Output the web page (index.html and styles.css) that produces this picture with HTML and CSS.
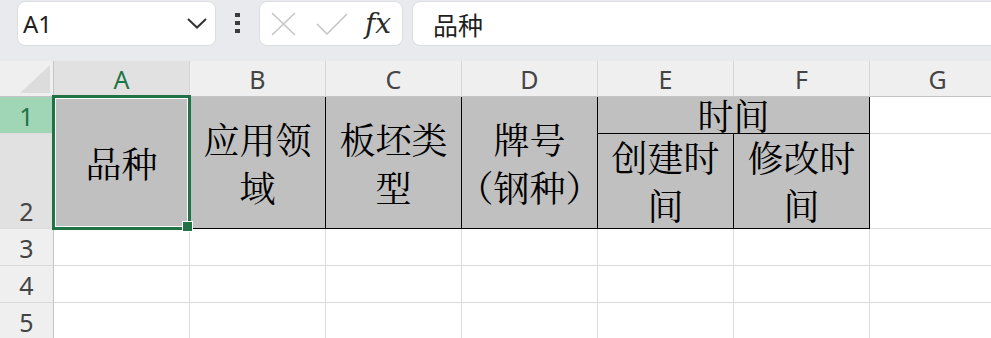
FILE: index.html
```html
<!DOCTYPE html>
<html lang="zh-CN">
<head>
  <meta charset="UTF-8">
  <title>品种 - 表格</title>
  <link rel="stylesheet" href="styles.css">
</head>
<body>
  <div class="toolbar">
    <div class="name-box">
      <span>A1</span>
      <svg width="20" height="11" viewBox="0 0 20 11"><path d="M1 1 L10 9.5 L19 1" fill="none" stroke="#333" stroke-width="2"/></svg>
    </div>
    <div class="grip"><i></i><i></i><i></i></div>
    <div class="fx-buttons">
      <svg width="25" height="24" viewBox="0 0 25 24"><path d="M1 1 L24 23 M24 1 L1 23" stroke="#c6c6c6" stroke-width="1.6" fill="none"/></svg>
      <svg width="32" height="22" viewBox="0 0 32 22"><path d="M1 11 L11 21 L31 1" stroke="#c6c6c6" stroke-width="1.6" fill="none"/></svg>
      <span class="fx">fx</span>
    </div>
    <div class="formula-bar">品种</div>
  </div>

  <div class="sheet">
    <!-- column headers -->
    <div class="corner"><svg width="30" height="28" viewBox="0 0 30 28"><polygon points="30,0 30,28 0,28" fill="#dcdcdc"/></svg></div>
    <div class="col-head active">A</div>
    <div class="col-head">B</div>
    <div class="col-head">C</div>
    <div class="col-head">D</div>
    <div class="col-head">E</div>
    <div class="col-head">F</div>
    <div class="col-head">G</div>

    <!-- row 1 -->
    <div class="row-head active">1</div>
    <div class="cell title tall selected"><span>品种</span></div>
    <div class="cell title tall"><span>应用领<br>域</span></div>
    <div class="cell title tall"><span>板坯类<br>型</span></div>
    <div class="cell title tall"><span>牌号<br><span class="halt">（</span>钢种<span class="halt">）</span></span></div>
    <div class="cell title wide"><span>时间</span></div>
    <div class="cell"></div>

    <!-- row 2 -->
    <div class="row-head dim">2</div>
    <div class="cell title"><span>创建时<br>间</span></div>
    <div class="cell title"><span>修改时<br>间</span></div>
    <div class="cell"></div>

    <div class="row-head">3</div>
    <div class="cell"></div><div class="cell"></div><div class="cell"></div><div class="cell"></div><div class="cell"></div><div class="cell"></div><div class="cell"></div>
    <div class="row-head">4</div>
    <div class="cell"></div><div class="cell"></div><div class="cell"></div><div class="cell"></div><div class="cell"></div><div class="cell"></div><div class="cell"></div>
    <div class="row-head">5</div>
    <div class="cell"></div><div class="cell"></div><div class="cell"></div><div class="cell"></div><div class="cell"></div><div class="cell"></div><div class="cell"></div>
  </div>
</body>
</html>
```

FILE: styles.css
```css
body {
  margin: 0;
  background-color: #fff;
  font-family: "Noto Sans", "Noto Sans CJK SC", sans-serif;
  color: #222;
  overflow: hidden;
}

/* formula toolbar */
.toolbar {
  display: flex;
  align-items: flex-start;
  height: 61px;
  padding: 1px 0 0 17px;
  box-sizing: border-box;
  background-color: #e8eaed;
}

.name-box {
  display: flex;
  align-items: center;
  justify-content: space-between;
  width: 199px;
  height: 45px;
  padding: 0 8px 0 5px;
  box-sizing: border-box;
  background-color: #fff;
  border: 1px solid #dcdde0;
  border-radius: 8px;
  font-size: 24px;
  color: #1f1f1f;
}

.grip {
  display: flex;
  flex-direction: column;
  gap: 4px;
  margin: 12px 0 0 19px;
}

.grip i {
  display: block;
  width: 5px;
  height: 4px;
  background-color: #3c3c3c;
}

.fx-buttons {
  display: flex;
  align-items: center;
  width: 144px;
  height: 45px;
  margin-left: 19px;
  padding-left: 11px;
  box-sizing: border-box;
  background-color: #fff;
  border: 1px solid #dcdde0;
  border-radius: 8px;
}

.fx-buttons svg + svg {
  margin-left: 20px;
}

.fx {
  margin-left: 17px;
  font-family: "DejaVu Serif", "Liberation Serif", serif;
  font-style: italic;
  font-size: 28px;
  color: #2a2a2a;
}

.formula-bar {
  flex: 1;
  display: flex;
  align-items: center;
  height: 45px;
  margin-left: 9px;
  padding-left: 20px;
  box-sizing: border-box;
  background-color: #fff;
  border: 1px solid #dcdde0;
  border-right: none;
  border-radius: 8px 0 0 8px;
  font-family: "Noto Sans CJK SC", sans-serif;
  font-size: 25px;
  color: #1f1f1f;
}

/* sheet grid */
.sheet {
  display: grid;
  grid-template-columns: 54px repeat(7, 136px);
  grid-template-rows: 36px 37px 95px 37px 37px 37px;
}

.sheet > div {
  box-sizing: border-box;
  border-right: 1px solid #dadada;
  border-bottom: 1px solid #dadada;
}

.corner {
  display: flex;
  align-items: flex-end;
  justify-content: flex-end;
  padding: 0 3px 3px 0;
  background-color: #efefef;
  border-right-color: #c4c4c4 !important;
  border-bottom-color: #c4c4c4 !important;
}

.col-head,
.row-head {
  display: flex;
  align-items: flex-end;
  justify-content: center;
  background-color: #efefef;
  font-size: 25px;
  line-height: 34px;
  color: #444;
}

.col-head {
  border-right-color: #d6d6d6 !important;
  border-bottom-color: #c4c4c4 !important;
}

.row-head {
  border-right-color: #c4c4c4 !important;
  border-bottom-color: #dcdcdc !important;
}

.col-head.active {
  background-color: #e1e1e1;
  color: #217346;
}

.row-head.active {
  background-color: #a0d6b6;
  color: #217346;
}

.row-head.dim {
  background-color: #e1e1e1;
}

.cell {
  background-color: #fff;
}

.title {
  display: flex;
  align-items: center;
  justify-content: center;
  text-align: center;
  white-space: nowrap;
  background-color: #c0c0c0;
  border-right-color: #000 !important;
  border-bottom-color: #000 !important;
  font-family: "Noto Serif CJK SC", "Noto Sans CJK SC", serif;
  font-size: 36px;
  line-height: 48px;
  color: #000;
}

.tall {
  grid-row: span 2;
}

.wide {
  grid-column: span 2;
}

.halt {
  font-feature-settings: "halt";
}

/* active cell selection */
.selected {
  position: relative;
}

.selected::after {
  content: "";
  position: absolute;
  top: -2px;
  left: -2px;
  right: -2px;
  bottom: -2px;
  border: 3px solid #217346;
  box-shadow: inset 0 0 0 1px #fff;
}

.selected::before {
  content: "";
  position: absolute;
  right: -3px;
  bottom: -3px;
  width: 9px;
  height: 9px;
  background-color: #217346;
  box-shadow: 0 0 0 1px #fff;
  z-index: 1;
}
```
